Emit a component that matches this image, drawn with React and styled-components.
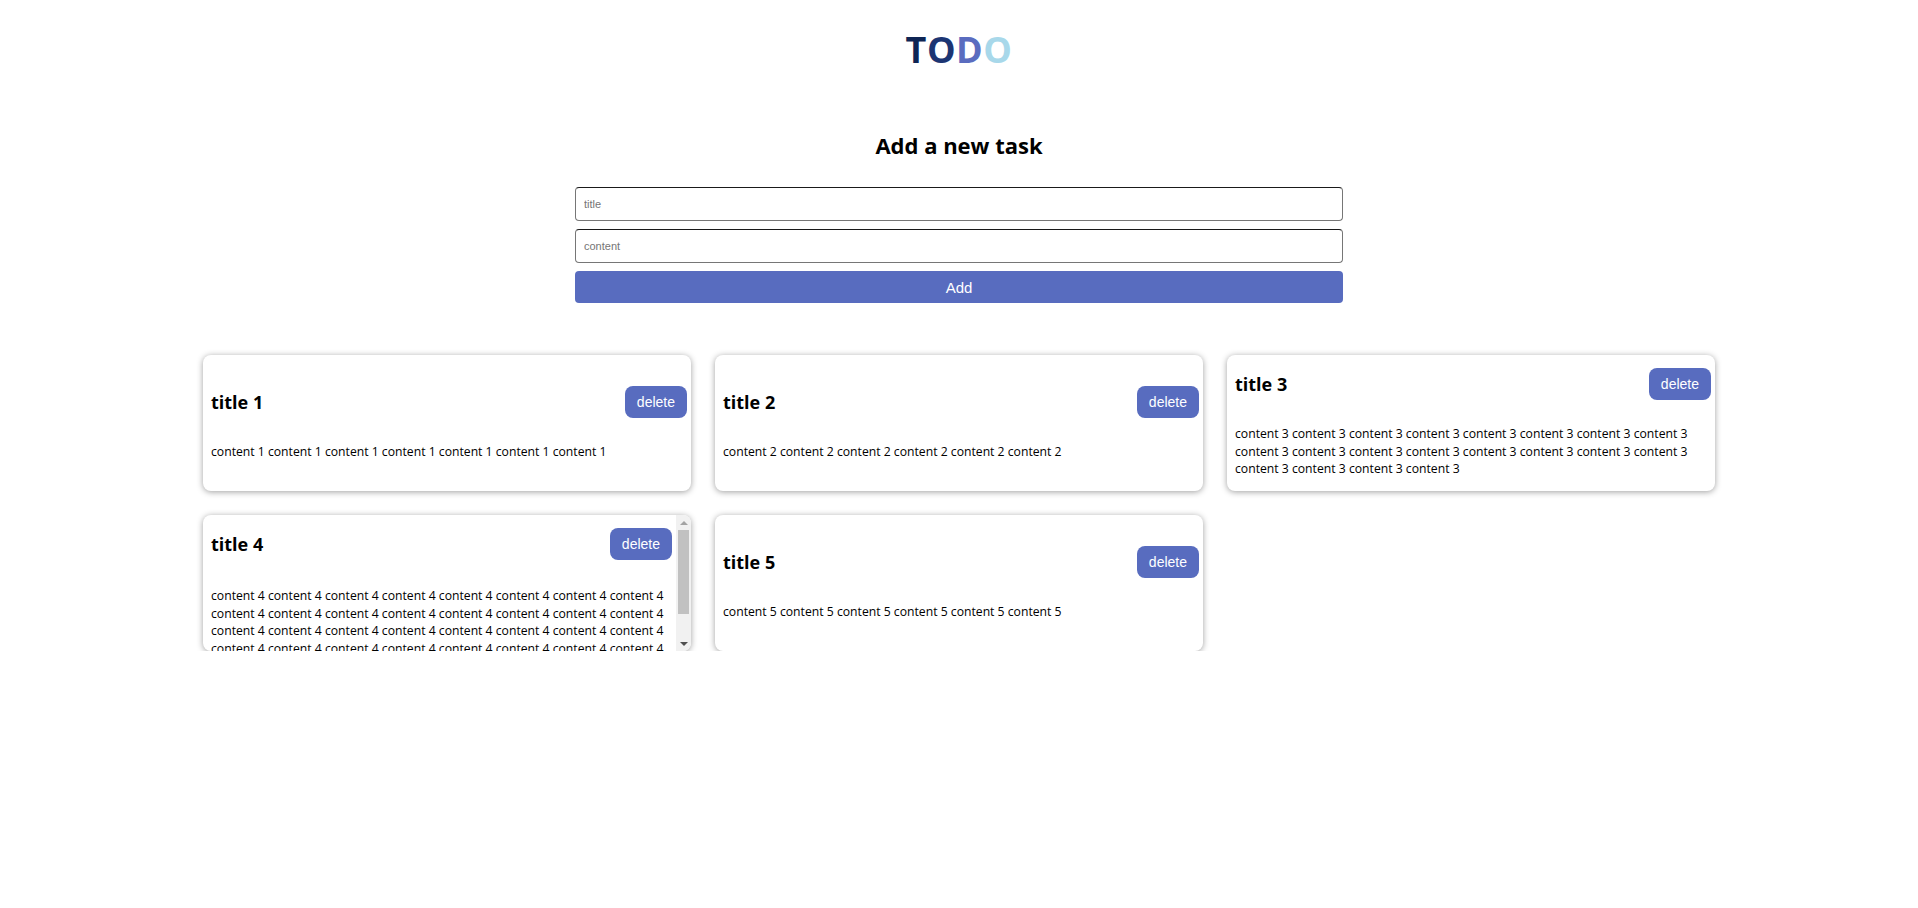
import React, { useLayoutEffect, useRef, useState } from "react";
import styled, { createGlobalStyle } from "styled-components";

const GlobalStyle = createGlobalStyle`
  body {
    margin: 0;
    background: #ffffff;
    font-family: "Open Sans", "Noto Sans", sans-serif;
    color: #000;
  }
`;

const initialTasks = [
  { id: 1, title: "title 1", content: Array(7).fill("content 1").join(" ") },
  { id: 2, title: "title 2", content: Array(6).fill("content 2").join(" ") },
  { id: 3, title: "title 3", content: Array(20).fill("content 3").join(" ") },
  { id: 4, title: "title 4", content: Array(40).fill("content 4").join(" ") },
  { id: 5, title: "title 5", content: Array(6).fill("content 5").join(" ") },
];

const logoColors = ["#0e2554", "#1c3573", "#5a6cbf", "#a8d8ea"];

// arrows are 15px each, the rest is the track
const ARROW = 15;

const TaskCard = ({ task, onDelete }) => {
  const scrollRef = useRef(null);
  const [bar, setBar] = useState(null);

  const measure = () => {
    const el = scrollRef.current;
    if (!el) return;
    if (el.scrollHeight <= el.clientHeight + 1) {
      setBar(null);
      return;
    }
    const track = el.clientHeight - ARROW * 2;
    const size = Math.max(20, (track * el.clientHeight) / el.scrollHeight);
    const top =
      ((track - size) * el.scrollTop) / (el.scrollHeight - el.clientHeight);
    setBar({ size, top });
  };

  useLayoutEffect(measure, [task.content]);

  return (
    <Card>
      <CardScroll ref={scrollRef} onScroll={measure} hasBar={!!bar}>
        <CardInner>
          <CardHeader>
            <CardTitle>{task.title}</CardTitle>
            <DeleteButton onClick={() => onDelete(task.id)}>delete</DeleteButton>
          </CardHeader>
          <CardContent hasBar={!!bar}>{task.content}</CardContent>
        </CardInner>
      </CardScroll>
      {bar && (
        <ScrollBar>
          <ScrollArrow dir="up" />
          <ScrollTrack>
            <ScrollThumb style={{ height: bar.size, top: bar.top }} />
          </ScrollTrack>
          <ScrollArrow dir="down" />
        </ScrollBar>
      )}
    </Card>
  );
};

const App = () => {
  const [tasks, setTasks] = useState(initialTasks);
  const [title, setTitle] = useState("");
  const [content, setContent] = useState("");

  const addTask = (e) => {
    e.preventDefault();
    if (!title) return;
    setTasks([...tasks, { id: Date.now(), title, content }]);
    setTitle("");
    setContent("");
  };

  const removeTask = (id) => setTasks(tasks.filter((t) => t.id !== id));

  return (
    <Page>
      <GlobalStyle />
      <Logo>
        {"TODO".split("").map((ch, i) => (
          <Letter key={i} color={logoColors[i]}>
            {ch}
          </Letter>
        ))}
      </Logo>

      <FormSection>
        <FormTitle>Add a new task</FormTitle>
        <Form onSubmit={addTask}>
          <Input
            placeholder="title"
            value={title}
            onChange={(e) => setTitle(e.target.value)}
          />
          <Input
            placeholder="content"
            value={content}
            onChange={(e) => setContent(e.target.value)}
          />
          <AddButton type="submit">Add</AddButton>
        </Form>
      </FormSection>

      <TaskGrid>
        {tasks.map((task) => (
          <TaskCard key={task.id} task={task} onDelete={removeTask} />
        ))}
      </TaskGrid>
    </Page>
  );
};

const Page = styled.div`
  padding-top: 25px;
  display: flex;
  flex-direction: column;
  align-items: center;
`;

const Logo = styled.h1`
  margin: 0;
  font-size: 36px;
  font-weight: 700;
  line-height: normal;
  letter-spacing: 0.5px;
`;

const Letter = styled.span`
  color: ${(p) => p.color};
`;

const FormSection = styled.section`
  margin-top: 56px;
  width: 768px;
  display: flex;
  flex-direction: column;
  align-items: center;
`;

const FormTitle = styled.h2`
  margin: 0 0 27px;
  font-size: 22px;
  font-weight: 700;
  line-height: 30px;
`;

const Form = styled.form`
  width: 100%;
  display: flex;
  flex-direction: column;
  gap: 8px;
`;

const Input = styled.input`
  box-sizing: border-box;
  width: 100%;
  height: 34px;
  padding: 0 8px;
  border: 1px solid #767676;
  border-top-color: #1a1a1a;
  border-radius: 4px;
  font-family: "Liberation Sans", Arial, sans-serif;
  font-size: 11px;
  outline: none;

  &::placeholder {
    color: #757575;
  }
`;

const AddButton = styled.button`
  height: 32px;
  border: none;
  border-radius: 4px;
  background: #586cbf;
  color: #fff;
  font-family: "Liberation Sans", Arial, sans-serif;
  font-size: 15px;
  cursor: pointer;
`;

const TaskGrid = styled.div`
  margin-top: 52px;
  display: grid;
  grid-template-columns: repeat(3, 488px);
  gap: 24px;
`;

const Card = styled.div`
  position: relative;
  height: 136px;
  border-radius: 8px;
  background: #fff;
  box-shadow: 0 1px 6px rgba(0, 0, 0, 0.38);
  overflow: hidden;
`;

const CardScroll = styled.div`
  box-sizing: border-box;
  height: 100%;
  padding: 13px ${(p) => (p.hasBar ? 19 : 4)}px 13px 8px;
  display: flex;
  flex-direction: column;
  overflow-y: auto;
  scrollbar-width: none;

  &::-webkit-scrollbar {
    display: none;
  }
`;

const CardInner = styled.div`
  margin: auto 0;
`;

const CardHeader = styled.div`
  display: flex;
  align-items: center;
  justify-content: space-between;
  height: 32px;
`;

const CardTitle = styled.h3`
  margin: 0;
  font-size: 18px;
  font-weight: 700;
`;

const DeleteButton = styled.button`
  height: 32px;
  padding: 0 12px;
  border: none;
  border-radius: 8px;
  background: #586cbf;
  color: #fff;
  font-family: "Liberation Sans", Arial, sans-serif;
  font-size: 14px;
  cursor: pointer;
`;

const CardContent = styled.p`
  margin: ${(p) => (p.hasBar ? 27 : 25)}px 0 0;
  font-size: 12.2px;
  line-height: 17.5px;
`;

const ScrollBar = styled.div`
  position: absolute;
  top: 0;
  right: 0;
  bottom: 0;
  width: 15px;
  background: #f1f1f1;
  display: flex;
  flex-direction: column;
`;

const ScrollArrow = styled.div`
  height: ${ARROW}px;
  flex: none;
  display: flex;
  align-items: center;
  justify-content: center;

  &::after {
    content: "";
    border-left: 4px solid transparent;
    border-right: 4px solid transparent;
    ${(p) =>
      p.dir === "up"
        ? "border-bottom: 4px solid #a3a3a3;"
        : "border-top: 4px solid #505050;"}
  }
`;

const ScrollTrack = styled.div`
  position: relative;
  flex: 1;
`;

const ScrollThumb = styled.div`
  position: absolute;
  left: 2px;
  right: 2px;
  background: #c1c1c1;
`;

export default App;
